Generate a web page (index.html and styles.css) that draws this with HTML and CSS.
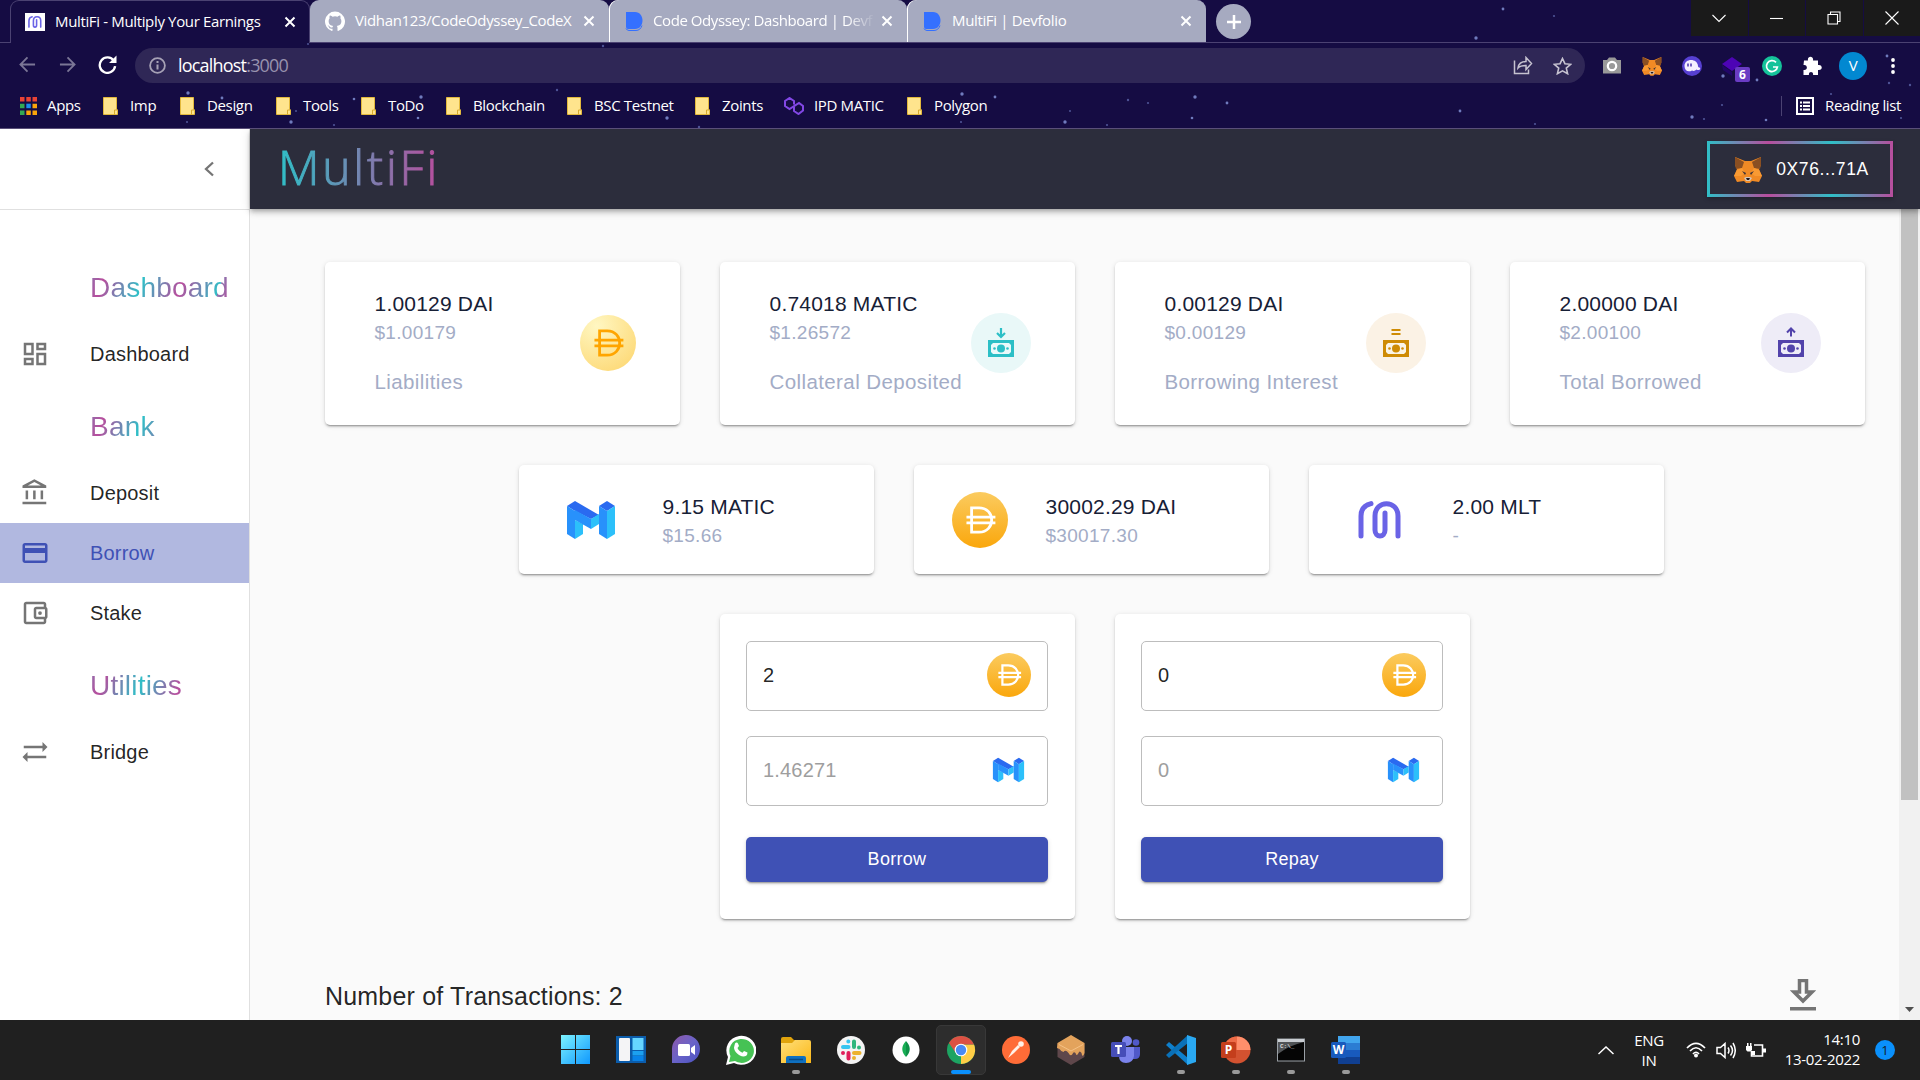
FILE: index.html
```html
<!DOCTYPE html>
<html lang="en">
<head>
<meta charset="utf-8">
<title>MultiFi - Multiply Your Earnings</title>
<link rel="stylesheet" href="styles.css">
</head>
<body>
<svg class="defs" width="0" height="0">
  <defs>
    <linearGradient id="gDai" x1="0" y1="0" x2="0" y2="1"><stop offset="0" stop-color="#fbcb5f"/><stop offset="1" stop-color="#faa70c"/></linearGradient>
    <radialGradient id="gDaiPale" cx=".3" cy=".2" r=".85"><stop offset="0" stop-color="#fff7c2"/><stop offset="1" stop-color="#fddb7c"/></radialGradient>
    <linearGradient id="gWin" x1="0" y1="0" x2="1" y2="1"><stop offset="0" stop-color="#7df3fe"/><stop offset="1" stop-color="#0f98fe"/></linearGradient>
    <linearGradient id="gFolder" x1="0" y1="0" x2="1" y2="1"><stop offset="0" stop-color="#ffdf7a"/><stop offset="1" stop-color="#fbb818"/></linearGradient>
    <linearGradient id="gMeet" x1="0" y1="0" x2="1" y2="1"><stop offset="0" stop-color="#8f58a8"/><stop offset=".5" stop-color="#6a63c8"/><stop offset="1" stop-color="#4a52c0"/></linearGradient>
  </defs>
  <symbol id="daiMark" viewBox="0 0 60 60"><path d="M21 17h8c18 0 18 26 0 26h-8zM15.500 27h31M15.500 33h31" fill="none" stroke="currentColor" stroke-width="3"/></symbol>
  <symbol id="dai" viewBox="0 0 60 60"><circle cx="30" cy="30" r="30" fill="url(#gDai)"/><g color="#fff"><use href="#daiMark"/></g></symbol>
  <symbol id="daiPale" viewBox="0 0 60 60"><circle cx="30" cy="30" r="30" fill="url(#gDaiPale)"/><g color="#ffa500"><use href="#daiMark"/></g></symbol>
  <symbol id="matic" viewBox="0 0 50 40">
    <path d="M1 6 9 1 33 15 25 19 9 11z" fill="#2a6af0"/><path d="M1 6 9 11v28L1 34z" fill="#2891fb"/><path d="M9 20l8 4v10l-8 5z" fill="#2cc0fa"/><path d="M9 10l16 9v10L9 20z" fill="#2891fb"/><path d="M25 19l8-5v10l-8 5z" fill="#2cc0fa"/>
    <path d="M33 6l8-5 8 5-8 5z" fill="#2a6af0"/><path d="M33 6l8 5v28l-8-5z" fill="#2891fb"/><path d="M41 11l8-5v28l-8 5z" fill="#2cc0fa"/>
  </symbol>
  <symbol id="mlt" viewBox="0 0 44 38"><path d="M3 35V15C3 8 7 4 13 2.600M40 35V15C40 -1.500 17 -1.500 17 15v14c0 8 10 8 10 0V12" fill="none" stroke="#6a63e6" stroke-width="5" stroke-linecap="round"/></symbol>
  <symbol id="fox" viewBox="0 0 28 27"><path d="M1 1l10 4h6l10-4v8l-2 4 3 7-3 6-7-1-2 2h-4l-2-2-7 1-3-6 3-7-2-4z" fill="#f08a25"/><path d="M1 1l9 5-2 6-6 1-1-4zM27 1l-9 5 2 6 6 1 1-4z" fill="#8a4f22"/><path d="M3 14l5-2 3 5-4 3-7 0zM25 14l-5-2-3 5 4 3 7 0z" fill="#f99a33"/><path d="M8 15l4 2-1 2zM20 15l-4 2 1 2z" fill="#3b3138"/><path d="M10 22l2-1h4l2 1-2 3h-4z" fill="#d5c5b8"/><path d="M12 22h4l-1 2h-2z" fill="#221a1e"/></symbol>
  <symbol id="folder" viewBox="0 0 15 18"><path d="M.5.5h13V12l1 1v4.500H.5z" fill="#ffe48d" stroke="#e3b93c"/><path d="M11.500 17.500V13h2.500" fill="none" stroke="#d9ab2c"/></symbol>
  <symbol id="close" viewBox="0 0 12 12"><path d="M1.500 1.500l9 9m0-9l-9 9" stroke="#fff" stroke-width="2" fill="none"/></symbol>
  <symbol id="devfolio" viewBox="0 0 20 20"><path d="M2 1h9c10 0 10 17 0 17H4q-2 0-2-2z" fill="#3470ff"/><path d="M2 17.500q1 2 3 2h7c3 0 5-2 6-5" fill="none" stroke="#3470ff"/></symbol>
  <symbol id="note" viewBox="0 0 26 32"><path d="M0 14h26v17H0z" fill="currentColor"/><path d="M5 17h16l2 2v7l-2 2H5l-2-2v-7z" fill="#fff" fill-opacity=".9"/><circle cx="13" cy="22.500" r="4" fill="currentColor"/><circle cx="6.500" cy="22.500" r="1.300" fill="currentColor"/><circle cx="19.500" cy="22.500" r="1.300" fill="currentColor"/></symbol>
</svg>

<header class="browser">
  <svg class="stars" width="1920" height="128">
    <g fill="#8ea0e6" opacity=".75"><circle cx="188" cy="93" r="1.700"/><circle cx="222" cy="98" r="1.400"/><circle cx="354" cy="99" r="1.300"/><circle cx="421" cy="97" r="1.700"/><circle cx="291" cy="122" r="1.700"/><circle cx="418" cy="118" r="1.300"/><circle cx="962" cy="94" r="1.700"/><circle cx="995" cy="97" r="1.400"/><circle cx="1195" cy="97" r="1.700"/><circle cx="1227" cy="103" r="1.400"/><circle cx="1065" cy="122" r="1.700"/><circle cx="1192" cy="118" r="1.300"/><circle cx="667" cy="118" r="1.700"/><circle cx="1503" cy="9" r="1.400"/><circle cx="1476" cy="38" r="1.700"/><circle cx="1887" cy="56" r="1.400"/><circle cx="1723" cy="76" r="1.700"/><circle cx="1757" cy="80" r="1.400"/><circle cx="1692" cy="117" r="1.700"/><circle cx="1766" cy="120" r="1.300"/><circle cx="1460" cy="111" r="1.400"/></g>
    <g fill="#6672b8" opacity=".7"><circle cx="557" cy="90" r="1.200"/><circle cx="187" cy="122" r="1.100"/><circle cx="334" cy="125" r="1.100"/><circle cx="296" cy="111" r="1"/><circle cx="699" cy="127" r="1.200"/><circle cx="603" cy="46" r="1.200"/><circle cx="308" cy="44" r="1"/><circle cx="961" cy="122" r="1.100"/><circle cx="1128" cy="100" r="1.200"/><circle cx="1148" cy="103" r="1.100"/><circle cx="1070" cy="111" r="1"/><circle cx="1107" cy="125" r="1.100"/><circle cx="1554" cy="16" r="1.100"/><circle cx="1722" cy="105" r="1.100"/><circle cx="1704" cy="119" r="1.100"/><circle cx="1535" cy="124" r="1.100"/><circle cx="1889" cy="83" r="1.200"/><circle cx="1910" cy="85" r="1.200"/><circle cx="1831" cy="94" r="1.100"/><circle cx="1901" cy="118" r="1.100"/></g>
  </svg>

  <div class="tabstrip">
    <div class="tab active"><svg class="fav" viewBox="0 0 20 18"><path fill="#fff" d="M0 0h20v18H0z"/><use href="#mlt" x="3" y="2.500" width="14" height="13"/></svg><span>MultiFi - Multiply Your Earnings</span><svg class="x"><use href="#close"/></svg></div>
    <div class="tab t2"><svg class="fav" viewBox="0 0 16 16"><path fill="#fff" d="M8 0a8 8 0 0 0-2.530 15.590c.4.070.550-.170.550-.380v-1.490c-2.230.490-2.690-.950-2.690-.950-.360-.920-.890-1.170-.890-1.170-.730-.500.050-.490.050-.490.800.060 1.230.830 1.230.830.710 1.220 1.870.870 2.330.660.070-.520.280-.870.500-1.070-1.770-.200-3.640-.890-3.640-3.950 0-.870.310-1.590.820-2.150-.080-.200-.360-1.020.080-2.120 0 0 .670-.210 2.200.820a7.500 7.500 0 0 1 4 0c1.530-1.040 2.200-.820 2.200-.820.440 1.100.160 1.920.080 2.120.510.560.820 1.270.820 2.150 0 3.070-1.870 3.750-3.650 3.950.290.250.540.730.540 1.480v2.190c0 .210.150.460.550.380A8 8 0 0 0 8 0z"/></svg><span>Vidhan123/CodeOdyssey_CodeX</span><svg class="x"><use href="#close"/></svg></div>
    <div class="tab t3"><svg class="fav"><use href="#devfolio"/></svg><span class="fade">Code Odyssey: Dashboard | Devf</span><svg class="x"><use href="#close"/></svg></div>
    <div class="tab t4"><svg class="fav"><use href="#devfolio"/></svg><span>MultiFi | Devfolio</span><svg class="x"><use href="#close"/></svg></div>
    <div class="newtab"><svg width="18" height="18" viewBox="0 0 18 18"><path d="M9 2v14M2 9h14" stroke="#fff" stroke-width="2.500"/></svg></div>
    <div class="winbtns">
      <div><svg width="14" height="14" viewBox="0 0 14 14"><path d="M.5 4 7 10.500 13.500 4"/></svg></div>
      <div><svg width="14" height="14" viewBox="0 0 14 14"><path d="M0 7.500h13"/></svg></div>
      <div><svg width="14" height="14" viewBox="0 0 14 14"><path d="M1 3.500h9.500V13H1zM3.500 3.500V1H13v9.500h-2.500"/></svg></div>
      <div><svg width="14" height="14" viewBox="0 0 14 14"><path d="M.5.5l13 13m0-13l-13 13"/></svg></div>
    </div>
  </div>

  <div class="toolbar">
    <svg class="nav dim" viewBox="0 0 18 18"><path d="M17 9H2M9 1.500 1.500 9 9 16.500"/></svg>
    <svg class="nav dim" viewBox="0 0 18 18"><path d="M1 9h15M9 1.500 16.500 9 9 16.500"/></svg>
    <svg class="nav reload" viewBox="0 0 18 18"><path d="M15 5.500A7.300 7.300 0 1 0 16.200 10.500"/><path d="M17.500.5v7h-7z" fill="#fff" stroke="none"/></svg>
    <div class="omnibox">
      <svg width="17" height="17" viewBox="0 0 17 17"><circle cx="8.500" cy="8.500" r="7.400" fill="none" stroke="#a6a1b5" stroke-width="1.800"/><path d="M8.500 7.500v5M8.500 4v2" stroke="#a6a1b5" stroke-width="2"/></svg>
      <span class="url">localhost<i>:3000</i></span>
      <svg width="20" height="19" viewBox="0 0 20 19"><path d="M1.500 4.500v13h14v-4M5 12c.5-4 3-6.500 8-6.500v-4l5.500 6-5.500 6V9.500c-4 0-6.300.6-8 2.500z" fill="none" stroke="#c6c2d0" stroke-width="1.500"/></svg>
      <svg width="19" height="18" viewBox="0 0 19 18"><path d="M9.500 1.500l2.400 5.200 5.700.6-4.300 3.800 1.300 5.600-5.100-2.900-5.100 2.900 1.300-5.600L1.400 7.300l5.700-.6z" fill="none" stroke="#c6c2d0" stroke-width="1.600"/></svg>
    </div>
    <div class="exts">
      <svg width="20" height="20" viewBox="0 0 20 20"><path d="M1 4h4l2-2.500h6L15 4h4v13.500H1z" fill="#999"/><circle cx="10" cy="10" r="4.200" fill="none" stroke="#fff" stroke-width="2.200"/></svg>
      <svg width="20" height="20"><use href="#fox"/></svg>
      <svg width="20" height="20" viewBox="0 0 20 20"><circle cx="10" cy="10" r="10" fill="#5740d2"/><path d="M2.500 10c0-8 13-8 13.500 0 0 2 2 1 2.200 2.200 0 2-2.200 2.300-3.700 1.300-1.500 1.500-3 1.800-4.500 1-3.500 2-7.500.5-7.500-4.500z" fill="#f5f0ff"/><path d="M6 7.500v3M9 7.500v3" stroke="#4830b0" stroke-width="1.500"/></svg>
      <div class="cube"><svg width="20" height="20" viewBox="0 0 20 20"><path d="M10 1l10 7-10 7L0 8z" fill="#4d04b5"/><path d="M0 9l10 7v4L1 14z" fill="#210668"/></svg><b>6</b></div>
      <svg width="20" height="20" viewBox="0 0 20 20"><circle cx="10" cy="10" r="10" fill="#15c39a"/><path d="M14 6.300A5.500 5.500 0 1 0 15.400 11H11" fill="none" stroke="#fff" stroke-width="1.700"/></svg>
      <svg width="20" height="20" viewBox="0 0 20 20"><path d="M2 4.500h4c-1-5 6-5 5 0h5V9c5-1 5 6 0 5v5h-5c1-4-5-4-4 0H1.500v-5c4.500 1 4.500-6 0-5z" fill="#fff"/></svg>
      <div class="avatar">V</div>
      <svg width="20" height="20" viewBox="0 0 20 20"><g fill="#fff"><circle cx="9" cy="4" r="1.900"/><circle cx="9" cy="10" r="1.900"/><circle cx="9" cy="16" r="1.900"/></g></svg>
    </div>
  </div>

  <div class="bookmarks">
    <div class="apps"><svg width="17" height="18" viewBox="0 0 17 18"><g fill="#ea4335"><path d="M0 0h4.500v4.500H0zM6.300 0h4.500v4.500H6.300zM12.500 0H17v4.500h-4.500z"/></g><path d="M0 6.700h4.500v4.500H0zM0 13.400h4.500V18H0z" fill="#34a853"/><path d="M6.300 6.700h4.500v4.500H6.300z" fill="#1a8cf0"/><path d="M12.500 6.700H17v4.500h-4.500zM6.300 13.400h4.500V18H6.300zM12.500 13.400H17V18h-4.500z" fill="#fba40a"/></svg><span>Apps</span></div>
    <div><svg class="fold"><use href="#folder"/></svg><span>Imp</span></div>
    <div><svg class="fold"><use href="#folder"/></svg><span>Design</span></div>
    <div><svg class="fold"><use href="#folder"/></svg><span>Tools</span></div>
    <div><svg class="fold"><use href="#folder"/></svg><span>ToDo</span></div>
    <div><svg class="fold"><use href="#folder"/></svg><span>Blockchain</span></div>
    <div><svg class="fold"><use href="#folder"/></svg><span>BSC Testnet</span></div>
    <div><svg class="fold"><use href="#folder"/></svg><span>Zoints</span></div>
    <div class="poly"><svg width="20" height="18" viewBox="0 0 20 18"><path d="M10 7.500V4L5.500 1 1 4v5l4.500 3L15 6l4 3v4.500L14.500 17 10 14v-4" fill="none" stroke="#8247e5" stroke-width="2"/></svg><span>IPD MATIC</span></div>
    <div><svg class="fold"><use href="#folder"/></svg><span>Polygon</span></div>
    <div class="reading"><svg width="18" height="18" viewBox="0 0 18 18"><path d="M1 1h16v16H1z" fill="none" stroke="#fff" stroke-width="2"/><path d="M4 5.500h2m1 0h7M4 9h2m1 0h7M4 12.500h2m1 0h7" stroke="#fff" stroke-width="1.800"/></svg><span>Reading list</span></div>
  </div>
</header>

<div class="app">
  <aside class="side">
    <div class="side-top"><svg width="12" height="16" viewBox="0 0 12 16"><path d="M10 1.500 3 8l7 6.500" fill="none" stroke="#757575" stroke-width="2.300"/></svg></div>
    <nav>
      <h2><span>Dashboard</span></h2>
      <a><svg class="mi" viewBox="0 0 24 24"><path d="M19 5v2h-4V5h4M9 5v6H5V5h4m10 8v6h-4v-6h4M9 17v2H5v-2h4M21 3h-8v6h8V3zM11 3H3v10h8V3zm10 8h-8v10h8V11zm-10 4H3v6h8v-6z"/></svg>Dashboard</a>
      <h2><span>Bank</span></h2>
      <a><svg class="mi" viewBox="0 0 24 24"><path d="M6.500 10h-2v7h2v-7zm6 0h-2v7h2v-7zm8.500 9H2v2h19v-2zm-2.500-9h-2v7h2v-7zm-7-6.740L16.710 6H6.290l5.210-2.740m0-2.260L2 6v2h19V6l-9.500-5z"/></svg>Deposit</a>
      <a class="on"><svg class="mi" viewBox="0 0 24 24"><path d="M20 4H4c-1.110 0-1.990.89-1.990 2L2 18c0 1.110.890 2 2 2h16c1.110 0 2-.89 2-2V6c0-1.110-.89-2-2-2zm0 14H4v-6h16v6zm0-10H4V6h16v2z"/></svg>Borrow</a>
      <a><svg class="mi" viewBox="0 0 24 24"><path d="M21 7.280V5c0-1.100-.9-2-2-2H5c-1.110 0-2 .9-2 2v14c0 1.100.890 2 2 2h14c1.100 0 2-.9 2-2v-2.280c.590-.350 1-.980 1-1.720V9c0-.740-.410-1.370-1-1.720zM20 9v6h-7V9h7zM5 19V5h14v2h-6c-1.100 0-2 .9-2 2v6c0 1.100.9 2 2 2h6v2H5z"/><circle cx="16" cy="12" r="1.500"/></svg>Stake</a>
      <h2><span>Utilities</span></h2>
      <a><svg class="mi" viewBox="0 0 24 24"><path d="M22 8l-4-4v3H3v2h15v3l4-4zM2 16l4 4v-3h15v-2H6v-3l-4 4z"/></svg>Bridge</a>
    </nav>
  </aside>

  <div class="page">
    <div class="topbar">
      <span class="logo">MultiFi</span>
      <div class="wallet"><svg width="28" height="27"><use href="#fox"/></svg>0X76...71A</div>
    </div>
    <div class="body">
      <main>
        <div class="row">
          <div class="card stat"><div><p class="v">1.00129 DAI</p><p class="u">$1.00179</p><p class="l">Liabilities</p></div><svg class="coin"><use href="#daiPale"/></svg></div>
          <div class="card stat"><div><p class="v">0.74018 MATIC</p><p class="u">$1.26572</p><p class="l">Collateral Deposited</p></div><div class="disc teal"><svg width="26" height="32"><path d="M13 2v8M9 7l4 4 4-4" fill="none" stroke="currentColor" stroke-width="2.200"/><use href="#note"/></svg></div></div>
          <div class="card stat"><div><p class="v">0.00129 DAI</p><p class="u">$0.00129</p><p class="l">Borrowing Interest</p></div><div class="disc amber"><svg width="26" height="32"><path d="M8.500 4h9M8.500 8h9" fill="none" stroke="currentColor" stroke-width="2"/><use href="#note"/></svg></div></div>
          <div class="card stat"><div><p class="v">2.00000 DAI</p><p class="u">$2.00100</p><p class="l">Total Borrowed</p></div><div class="disc violet"><svg width="26" height="32"><path d="M13 10.500V3M9 6.500l4-4 4 4" fill="none" stroke="currentColor" stroke-width="2"/><use href="#note"/></svg></div></div>
        </div>
        <div class="row balances">
          <div class="card bal"><svg class="ic-matic"><use href="#matic"/></svg><div><p class="v">9.15 MATIC</p><p class="u">$15.66</p></div></div>
          <div class="card bal b2"><svg class="coin"><use href="#dai"/></svg><div><p class="v">30002.29 DAI</p><p class="u">$30017.30</p></div></div>
          <div class="card bal b3"><svg class="ic-mlt"><use href="#mlt"/></svg><div><p class="v">2.00 MLT</p><p class="u">-</p></div></div>
        </div>
        <div class="row">
          <div class="card form"><div class="field">2<svg class="fd"><use href="#dai"/></svg></div><div class="field off">1.46271<svg class="fm"><use href="#matic"/></svg></div><div class="btn">Borrow</div></div>
          <div class="card form"><div class="field">0<svg class="fd"><use href="#dai"/></svg></div><div class="field off">0<svg class="fm"><use href="#matic"/></svg></div><div class="btn">Repay</div></div>
        </div>
        <div class="txs"><span>Number of Transactions: 2</span><svg width="26" height="32" viewBox="0 0 26 32"><path d="M9.500 1.500h7V13H22L13 22 4 13h5.500z" fill="none" stroke="#757575" stroke-width="3.500"/><path d="M0 28h26v3.500H0z" fill="#757575"/></svg></div>
      </main>
      <div class="scroll"><div class="thumb"></div><svg width="10" height="6"><path d="M0 0h9L4.500 5z" fill="#505050"/></svg></div>
    </div>
  </div>
</div>

<footer class="taskbar">
  <div class="tasks">
    <div><svg viewBox="0 0 30 30"><path d="M0 0h14v14H0zM15 0h14v14H15zM0 15h14v14H0zM15 15h14v14H15z" fill="url(#gWin)"/></svg></div>
    <div><svg viewBox="0 0 30 30"><path d="M0 1h30v27H0z" fill="#0b5cab"/><rect x="3" y="3" width="11" height="23" rx="1" fill="#f4f4f6"/><path d="M16.500 3h11v12h-11z" fill="#66d5ff"/><path d="M16.500 16h11v4.500h-11z" fill="#1ca0ef"/><path d="M16.500 21h11v5h-11z" fill="#0883e8"/></svg></div>
    <div><svg viewBox="0 0 30 30"><path d="M1 28V15a14 14 0 1 1 14 13z" fill="url(#gMeet)"/><rect x="7" y="9" width="12" height="12" rx="1.500" fill="#fff"/><path d="M20 13l4-3v10l-4-3z" fill="#fff"/></svg></div>
    <div><svg viewBox="0 0 30 30"><path d="M0 30l2-8A15 14.500 0 1 1 8 28z" fill="#fff"/><path d="M3 27l1.500-6A12.300 12 0 1 1 9 26z" fill="#46c254"/><path d="M9 8.500c1-1.500 2.500-1 3 0l1 2.500-1.500 2c1 2.500 3 4 5 4.700l1.500-1.700 3.500 1.500c0 3-2 4-4 4-5-.5-9.500-5-9.500-9z" fill="#fff"/></svg></div>
    <div class="run"><svg viewBox="0 0 30 30"><path d="M0 4q0-2 2-2h8l3 3h15v8H0z" fill="#e0a30c"/><path d="M0 8h11l3-3h14q2 0 2 2v21H0z" fill="url(#gFolder)"/><path d="M5 28v-5q0-2 2-2h16q2 0 2 2v5z" fill="#0f70c0"/><path d="M8 24.500h14" stroke="#074a86" stroke-width="1.500"/></svg></div>
    <div><svg viewBox="0 0 30 30"><circle cx="15" cy="15" r="14" fill="#f4f4f4"/><g stroke-width="4" stroke-linecap="round"><path d="M12.300 6.500v.1M7 12h5.500" stroke="#36c5f0"/><path d="M18 6.500V12M23 12.500v.1" stroke="#2eb67d"/><path d="M18 18h5.500M18 23v.1" stroke="#ecb22e"/><path d="M12.500 18v5.500M7 18v.1" stroke="#e01e5a"/></g></svg></div>
    <div><svg viewBox="0 0 30 30"><circle cx="15" cy="15" r="13.500" fill="#fff"/><path d="M15 6c5 5 5 11 0 16z" fill="#0e9148"/><path d="M15 6c-5 5-5 11 0 16z" fill="#18ae54"/></svg></div>
    <div class="cur"><svg viewBox="0 0 30 30"><circle cx="15" cy="15" r="14" fill="#1da462"/><path d="M15 15 15 29A14 14 0 0 0 28 9.500H15z" fill="#ffcd46"/><path d="M2.900 8A14 14 0 0 1 28 9.500H15l-5.500 8z" fill="#dd5144"/><circle cx="15" cy="15" r="6.300" fill="#fff"/><circle cx="15" cy="15" r="5.200" fill="#4a8af4"/></svg></div>
    <div><svg viewBox="0 0 30 30"><circle cx="15" cy="15" r="14" fill="#ff6c37"/><path d="M7 23l4-7 6-6 2 2-6 6z" fill="#fff1e8"/><circle cx="20" cy="9" r="2.800" fill="#fff1e8"/></svg></div>
    <div><svg viewBox="0 0 30 30"><path d="M1.500 8 15 15l13.500-7v14L15 30 1.500 22z" fill="#5f474b"/><path d="M1.500 8 15 0l13.500 8v10q-2 6-3 0-2-3-3 0-2 4-3 0-2-2-3 1-2 3-4-1-3-4-5-1-2 0-4-3l-2.500-1z" fill="#e3a35c"/><path d="M3 9.500l12 6.500 12-6.500" fill="none" stroke="#f5c185"/></svg></div>
    <div><svg viewBox="0 0 30 30"><circle cx="16" cy="6" r="5" fill="#7b83eb"/><circle cx="25" cy="7.500" r="3.300" fill="#5059c9"/><path d="M20 12h9v7q0 5-5 5h-4z" fill="#5059c9"/><path d="M9 12h14v9q-1 7-8 7t-7-7z" fill="#7b83eb"/><rect y="7" width="15" height="15" rx="1.500" fill="#464eb8"/><path d="M4 11h7M7.500 11v8" stroke="#fff" stroke-width="2.200"/></svg></div>
    <div class="run"><svg viewBox="0 0 30 30"><path d="M0 10l3-3 19 16v7z" fill="#0f80cc"/><path d="M0 20l3 3L22 8V0z" fill="#0a71b8"/><path d="M21 0l9 3v24l-9 3z" fill="#2aa9f2"/></svg></div>
    <div class="run"><svg viewBox="0 0 30 30"><circle cx="16" cy="15" r="13.500" fill="#d35230"/><path d="M16 1.500A13.500 13.500 0 0 1 29.500 15H16z" fill="#ff8f6b"/><path d="M16 1.500A13.500 13.500 0 0 0 2.500 15H16z" fill="#ed6c47"/><rect y="7" width="15" height="16" rx="1.500" fill="#c43e1c"/><text x="7.500" y="19" class="ltr">P</text></svg></div>
    <div class="run"><svg viewBox="0 0 30 30"><rect x="1.500" y="4" width="27" height="22" fill="#050505" stroke="#9aa0a6"/><path d="M2 4h26v3H2z" fill="#c9cdd2"/><path d="M2 7h26q-14 3-26 12z" fill="#505356"/><text x="4" y="13" class="cmd">C:\_</text></svg></div>
    <div class="run"><svg viewBox="0 0 30 30"><path d="M7 1h22v7H7z" fill="#41a5ee"/><path d="M7 8h22v7H7z" fill="#2b7cd3"/><path d="M7 15h22v7H7z" fill="#185abd"/><path d="M7 22h22v7H7z" fill="#103f91"/><rect y="7" width="15" height="16" rx="1.500" fill="#185abd"/><text x="7.500" y="19" class="ltr">W</text></svg></div>
  </div>
  <div class="tray">
    <svg width="16" height="9" viewBox="0 0 16 9"><path d="M.5 8 8 1l7.500 7" fill="none" stroke="#fff" stroke-width="1.500"/></svg>
    <div class="lang">ENG<br>IN</div>
    <div class="sys">
      <svg width="20" height="16" viewBox="0 0 20 16"><g fill="none" stroke="#fff" stroke-width="1.700"><path d="M1 6q9-9 18 0M4 9q6-6.500 12 0M7 12q3-3.500 6 0"/></g><circle cx="10" cy="13.500" r="2" fill="#fff"/></svg>
      <svg width="20" height="17" viewBox="0 0 20 17"><path d="M1 5.500h3.500L9 1.500v14l-4.500-4H1zM12 5.500q2 3 0 6M14.500 3.500q4 5 0 10M17 1q4.500 7.500 0 15" fill="none" stroke="#fff" stroke-width="1.500"/></svg>
      <svg width="20" height="17" viewBox="0 0 20 17"><path d="M8 3h8.500v11H5.500V9" fill="none" stroke="#fff" stroke-width="1.600"/><path d="M17 6.500h3v4h-3zM0 4h6v4L4.500 9.500h-3L0 8zM1 1h1.500v3H1zM4 1h1.500v3H4zM5.500 9H9v4H5.500z" fill="#fff"/></svg>
    </div>
    <div class="clock">14:10<br>13-02-2022</div>
    <div class="count">1</div>
  </div>
</footer>
</body>
</html>
```
FILE: styles.css
```css
* { box-sizing: border-box; }
body { margin: 0; width: 1920px; height: 1080px; overflow: hidden; display: flex; flex-direction: column; font-family: "Liberation Sans", Arial, sans-serif; background: #fafafa; }
svg { display: block; flex: none; }
.defs { position: absolute; }
p, h2 { margin: 0; font-weight: 400; }

/* browser chrome */
.browser { position: relative; height: 129px; flex: none; background: #150c43; border-bottom: 1px solid #5a5079; color: #fff; font: 15px "Open Sans", "Noto Sans", sans-serif; letter-spacing: -.35px; display: flex; flex-direction: column; white-space: nowrap; }
.stars { position: absolute; left: 0; top: 0; }
.tabstrip { position: relative; height: 43px; flex: none; display: grid; grid-template-columns: 300px 299px 298px 299px 35px 1fr; padding-left: 10px; border-bottom: 1px solid #4b4272; }
.tab { display: flex; align-items: center; height: 42px; padding: 0 14px 0 15px; background: #a6aac0; border-radius: 9px 9px 0 0; }
.tab.active { background: #150c43; border: 1px solid #4b4272; border-bottom: 0; height: 43px; padding-right: 13px; padding-left: 14px; }
.tab .fav { width: 20px; height: 20px; margin-right: 10px; }
.tab.t2 .fav { height: 21px; }
.tab span { flex: 1; margin-top: -2px; }
.tab .x { width: 12px; height: 12px; margin-left: 8px; }
.t3, .t4 { box-shadow: inset 1px 0 #fff; }
.tab .fade { margin-left: -1px; letter-spacing: -.42px; -webkit-mask-image: linear-gradient(90deg, #000 88%, transparent 101%); mask-image: linear-gradient(90deg, #000 88%, transparent 101%); }
.newtab { width: 35px; height: 35px; margin: 4px 0 0 10px; border-radius: 50%; background: #a6aac0; display: grid; place-items: center; }
.winbtns { justify-self: end; display: flex; gap: 1px; height: 36px; }
.winbtns div { width: 56.500px; background: #1a1a1a; display: grid; place-items: center; }
.winbtns path { fill: none; stroke: #fff; stroke-width: 1.100; }
.toolbar { position: relative; height: 46px; padding-top: 5px; display: flex; flex: none; align-items: flex-start; }
.nav { width: 17px; height: 17px; margin: 8px 23px 0 0; fill: none; stroke: #fff; stroke-width: 2.200; }
.nav:first-child { margin-left: 19px; }
.dim { stroke: #7b7696; stroke-width: 1.900; }
.reload { width: 19px; height: 19px; margin: 7px 18px 0 -1px; }
.omnibox { width: 1450px; height: 35px; border-radius: 18px; background: #2f2756; display: flex; align-items: center; padding: 0 13px 0 14px; }
.url { flex: 1; font-size: 18px; letter-spacing: -.8px; margin: -2px 0 0 12px; }
.url i { font-style: normal; color: #9892ae; }
.omnibox svg:last-child { margin-left: 20px; }
.exts { display: flex; gap: 20px; align-items: center; height: 35px; margin-left: 17px; }
.cube { position: relative; width: 20px; height: 20px; }
.cube b { position: absolute; left: 13px; top: 11px; width: 15px; height: 15px; border-radius: 2px; background: #6a3cc4; font-size: 12px; line-height: 16px; text-align: center; letter-spacing: 0; }
.avatar { width: 28px; height: 28px; border-radius: 50%; background: #0288d1; text-align: center; line-height: 27px; margin: 0 -3px; }
.bookmarks { position: relative; height: 36px; display: grid; grid-template-columns: 83px 77px 96px 85px 85px 121px 128px 89px 123px 150px 1fr; padding: 0 0 2px 20px; }
.bookmarks div { display: flex; align-items: center; gap: 12px; }
.bookmarks span { margin-top: -2px; }
.bookmarks .apps { gap: 10px; }
.fold { width: 15px; height: 18px; }
.bookmarks .poly { gap: 10px; }
.bookmarks .reading { justify-self: end; width: 139px; height: 20px; align-self: center; border-left: 1px solid #4b4272; padding-left: 14px; gap: 11px; }

/* application */
.app { flex: none; height: 891px; display: flex; overflow: hidden; }
.side { width: 250px; flex: none; background: #fff; border-right: 1px solid #e0e0e0; }
.side-top { height: 81px; border-bottom: 1px solid #e0e0e0; display: flex; align-items: center; justify-content: flex-end; padding-right: 34px; }
nav { padding-top: 35px; }
nav h2 { height: 79px; font-size: 28px; line-height: 85px; letter-spacing: .2px; padding-left: 90px; }
nav h2 span { background: repeating-linear-gradient(110deg, #8c74ad 0, #b84d9d 15px, #2fbfc7 52px, #b84d9d 90px, #2fbfc7 127px); -webkit-background-clip: text; background-clip: text; color: transparent; }
nav a { display: flex; align-items: center; gap: 40px; height: 60px; padding-left: 20px; font-size: 20px; letter-spacing: .19px; color: rgba(0,0,0,.87); }
.mi { width: 30px; height: 30px; fill: #757575; }
nav .on { background: #b1b8e0; color: #3f51b5; }
.on .mi { fill: #3f51b5; }
.page { flex: 1; display: flex; flex-direction: column; }
.topbar { position: relative; z-index: 1; height: 80px; flex: none; background: #2c2d3c; box-shadow: 0 2px 4px -1px rgba(0,0,0,.2), 0 4px 5px rgba(0,0,0,.14), 0 1px 10px rgba(0,0,0,.12); display: flex; align-items: center; justify-content: space-between; padding: 0 27px 0 28px; }
.logo { font: 300 48px/70px "Open Sans", "Noto Sans", sans-serif; letter-spacing: 2.800px; margin-top: -5px; background: linear-gradient(90deg, #2fbfc7, #b84d9d); -webkit-background-clip: text; background-clip: text; color: transparent; -webkit-text-stroke: 1px transparent; }
.wallet { width: 186px; height: 56px; border: 3px solid; border-image: linear-gradient(90deg, #2fbfc7, #b84d9d 33%, #2fbfc7 67%, #b84d9d) 3; display: flex; align-items: center; justify-content: center; gap: 14px; color: #fff; font-size: 17.500px; letter-spacing: .6px; padding-left: 3px; box-shadow: 0 2px 4px rgba(0,0,0,.25); }
.body { flex: 1; display: flex; min-height: 0; overflow: hidden; }
main { flex: 1; padding: 53px 34px 0 75px; display: flex; flex-direction: column; gap: 40px; }
.row { display: flex; gap: 40px; justify-content: center; }
.balances { padding-right: 8px; }
.card { width: 355px; flex: none; background: #fff; border-radius: 5px; box-shadow: 0 3px 1px -2px rgba(0,0,0,.2), 0 2px 2px rgba(0,0,0,.14), 0 1px 5px rgba(0,0,0,.12); }
.stat { height: 163px; padding: 30px 44px 0 49.500px; display: flex; justify-content: space-between; }
.v { font-size: 21px; line-height: 24px; letter-spacing: .2px; color: #172036; white-space: nowrap; }
.u { font-size: 19px; line-height: 24px; margin-top: 5px; letter-spacing: .3px; color: #a3acc6; }
.l { font-size: 20.500px; line-height: 24px; margin-top: 25px; color: #a3acc6; letter-spacing: .4px; white-space: nowrap; }
.coin { width: 56px; height: 56px; }
.stat > .coin { margin-top: 23px; }
.disc { width: 60px; height: 60px; flex: none; border-radius: 50%; margin: 21px 0 0 -10px; display: grid; place-items: center; padding-bottom: 2px; }
.teal { background: #e9f8f8; color: #2cbfc6; }
.amber { background: #fbf2e5; color: #ce8b04; }
.violet { background: #eeecf7; color: #5243ab; }
.bal { height: 109px; display: flex; align-items: center; padding-left: 47px; }
.bal > div { margin: 3px 0 0 47px; }
.ic-matic { width: 50px; height: 40px; }
.b2 { padding-left: 38px; }
.b2 > div { margin-left: 38px; }
.b3 { padding-left: 49px; }
.ic-mlt { width: 44px; height: 38px; }
.b3 > div { margin-left: 51px; }
.form { height: 305px; padding: 27px 27px 0 26px; }
.field { height: 70px; border: 1px solid #bdbdbd; border-radius: 5px; display: flex; align-items: center; justify-content: space-between; padding: 0 16px 2px; font-size: 20px; letter-spacing: .19px; color: rgba(0,0,0,.87); margin-bottom: 25px; }
.off { color: #9e9e9e; padding-right: 22px; }
.fd { width: 44px; height: 44px; }
.fm { width: 33px; height: 26px; }
.btn { height: 45px; margin-top: 31px; border-radius: 5px; background: #3f51b5; color: #fff; text-align: center; font-size: 18px; letter-spacing: .3px; line-height: 44px; box-shadow: 0 3px 1px -2px rgba(0,0,0,.2), 0 2px 2px rgba(0,0,0,.14), 0 1px 5px rgba(0,0,0,.12); }
.txs { display: flex; justify-content: space-between; align-items: center; font-size: 25px; letter-spacing: .19px; color: rgba(0,0,0,.87); margin-top: 20px; padding-right: 49px; }
.txs span { margin: 2px 0 0; }
.scroll { width: 21px; background: #f1f1f1; display: flex; flex-direction: column; justify-content: space-between; align-items: center; padding-bottom: 7px; }
.thumb { width: 17px; height: 591px; background: #c1c1c1; }

/* taskbar */
.taskbar { height: 60px; background: #202020; display: flex; justify-content: space-between; color: #fff; font: 15px/20px "Open Sans", "Noto Sans", sans-serif; }
.tasks { display: flex; gap: 5px; padding: 5px 0 0 551px; }
.tasks div { position: relative; width: 50px; height: 50px; border-radius: 5px; display: grid; place-items: center; border: 1px solid transparent; }
.tasks svg { width: 30px; height: 30px; }
.tasks .cur { background: #2d2d2d; border-color: #383838; }
.run::after, .cur::after { content: ""; position: absolute; left: 20px; bottom: 0; width: 8px; height: 4px; border-radius: 2px; background: #9a9a9a; }
.cur::after { left: 14px; width: 20px; background: #0a90fb; }
.ltr { font: bold 12px "Open Sans", sans-serif; fill: #fff; text-anchor: middle; }
.cmd { font: bold 6px "Liberation Mono", monospace; fill: #ddd; }
.tray { display: flex; align-items: center; padding-right: 25px; }
.lang { text-align: center; width: 40px; margin-left: 15px; letter-spacing: -.3px; margin-top: -1px; }
.sys { display: flex; gap: 10px; margin-left: 17px; }
.clock { width: 94px; text-align: right; letter-spacing: -.3px; white-space: nowrap; margin-top: -2px; }
.count { width: 20px; height: 20px; border-radius: 50%; background: #0a90fb; color: #10202e; text-align: center; font-size: 13px; margin-left: 15px; }
```
